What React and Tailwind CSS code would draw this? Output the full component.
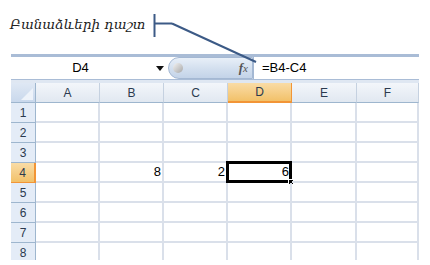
import React from "react";

const cols = ["A", "B", "C", "D", "E", "F"];
const colW = [64, 64, 64, 64, 65, 62];
const rows = [1, 2, 3, 4, 5, 6, 7, 8];
const values = { "4-B": "8", "4-C": "2", "4-D": "6" };

function ColHeader({ label, w, selected }) {
  return (
    <div
      className={
        "h-[20px] shrink-0 flex items-center justify-center border-r text-[12px] " +
        (selected
          ? "bg-gradient-to-b from-[#f9dca6] to-[#f2c168] border-[#f29536] border-b-2 border-b-[#f29536] text-[#2b3a4f]"
          : "bg-gradient-to-b from-[#f3f6fa] to-[#e1e8f1] border-[#c5d1e0] border-b border-b-[#9eb6ce] text-[#2b3a4f]")
      }
      style={{ width: w }}
    >
      {label}
    </div>
  );
}

export default function App() {
  return (
    <div className="relative w-[430px] h-[265px] bg-white overflow-hidden font-['Liberation_Sans',Arial,sans-serif]">
      <div className="pl-[10px] pt-[12px] h-[54px]">
        <span className="italic text-[13.5px] text-[#222] font-['DejaVu_Serif','Noto_Serif',serif]">
          Բանաձևերի դաշտ
        </span>
      </div>

      <div className="ml-[11px] w-[408px] h-[206px] overflow-hidden">
        {/* formula toolbar */}
        <div className="border-t-[3px] border-[#a9bcd6] border-b border-b-[#a9bcd6] bg-white flex h-[26px]">
          <div className="w-[157px] flex items-center relative">
            <div className="flex-1 text-center text-[13px] text-black pr-[6px]">D4</div>
            <svg width="8" height="5" viewBox="0 0 8 5" className="mr-[4px]">
              <path d="M0 0 H8 L4 5 Z" fill="#111" />
            </svg>
          </div>
          <div className="w-[85px] rounded-l-full bg-gradient-to-b from-[#e8eff8] via-[#d4e0ef] to-[#c3d3e8] border border-[#a4b8d3] flex items-center relative">
            <div className="ml-[4px] w-[10px] h-[10px] rounded-full bg-gradient-to-br from-[#f4f4f4] to-[#a7a7a7]" />
            <div className="flex-1" />
            <span className="mr-[4px] italic text-[13px] text-[#555] font-['Liberation_Serif',serif]">
              <span className="font-bold">f</span>
              <span className="text-[11px]">x</span>
            </span>
          </div>
          <div className="flex-1 flex items-center pl-[8px] text-[13px] text-black border-l border-[#a4b8d3]">
            =B4-C4
          </div>
        </div>
        <div className="h-[3px] bg-[#dfe7f2]" />

        {/* grid */}
        <div className="flex">
          <div className="w-[25px] h-[20px] shrink-0 bg-gradient-to-b from-[#dfe8f4] to-[#c9d8ec] border-r border-b border-[#9eb6ce] flex items-end justify-end p-[2px]">
            <svg width="12" height="12" viewBox="0 0 12 12">
              <path d="M12 0 V12 H0 Z" fill="#eef3fa" />
            </svg>
          </div>
          {cols.map((c, i) => (
            <ColHeader key={c} label={c} w={colW[i]} selected={c === "D"} />
          ))}
        </div>
        {rows.map((r) => (
          <div key={r} className="flex">
            <div
              className={
                "w-[25px] h-[20px] shrink-0 flex items-center justify-center text-[12px] text-[#2b3a4f] border-b " +
                (r === 4
                  ? "bg-gradient-to-b from-[#f9dca6] to-[#f2c168] border-r-2 border-r-[#f29536] border-b-[#f29536]"
                  : "bg-[#e4ecf7] border-r border-r-[#9eb6ce] border-b-[#9eb6ce]")
              }
            >
              {r}
            </div>
            {cols.map((c, i) => {
              const sel = r === 4 && c === "D";
              return (
                <div
                  key={c}
                  className="h-[20px] shrink-0 border-r-2 border-b-2 border-[#dae0ea] relative flex items-center justify-end pr-[1px] text-[13px] text-black"
                  style={{ width: colW[i] }}
                >
                  {sel && (
                    <div className="absolute left-[-2px] top-[-2px] w-[66px] h-[22px] border-[3px] border-black">
                      <div className="absolute right-[-5px] bottom-[-5px] w-[6px] h-[6px] bg-black border border-white" />
                    </div>
                  )}
                  <span className="relative">{values[`${r}-${c}`] || ""}</span>
                </div>
              );
            })}
          </div>
        ))}
      </div>

      <svg className="absolute left-0 top-0 pointer-events-none" width="430" height="265">
        <line x1="154.5" y1="14" x2="154.5" y2="37" stroke="#3c5a86" strokeWidth="2" />
        <line x1="155" y1="23.5" x2="172" y2="23.5" stroke="#3c5a86" strokeWidth="2" />
        <line x1="172" y1="23.5" x2="256" y2="62" stroke="#3c5a86" strokeWidth="2" />
      </svg>
    </div>
  );
}
